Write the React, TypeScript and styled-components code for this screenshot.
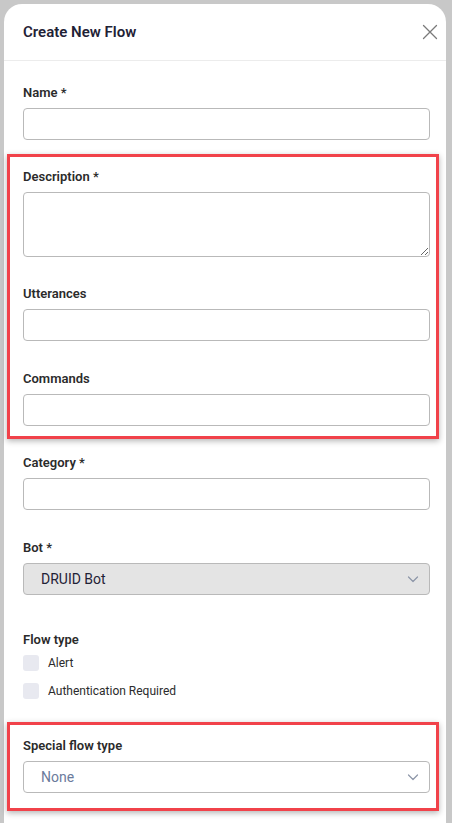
import * as React from 'react'
import styled, { createGlobalStyle } from 'styled-components'

const GlobalStyle = createGlobalStyle`
    html, body {
        margin: 0;
        padding: 0;
        background-color: #c8c8c8;
        font-family: Roboto, "Noto Sans", "Liberation Sans", sans-serif;
    }
`

const Page = styled.div`
    display: flex;
    height: 823px;
    padding: 4px 6px 0 4px;
    box-sizing: border-box;
    overflow: hidden;
`

const Modal = styled.div`
    flex: 1;
    display: flex;
    flex-direction: column;
    background-color: #ffffff;
    border-radius: 18px 18px 0 0;
`

const Header = styled.div`
    display: flex;
    align-items: center;
    justify-content: space-between;
    height: 56px;
    padding: 0 4px 0 19px;
    border-bottom: 1px solid #ececec;
`

const Title = styled.h2`
    margin: 0;
    font-size: 15px;
    font-weight: 600;
    color: #1f2236;
`

const CloseButton = styled.button`
    display: flex;
    width: 24px;
    height: 24px;
    padding: 0;
    border: none;
    background: none;
    align-items: center;
    justify-content: center;
    cursor: pointer;
`

const Body = styled.div`
    display: flex;
    flex-direction: column;
    padding: 24px 16px 0 19px;
`

const Field = styled.div<{ $gap?: number, $top?: number }>`
    display: flex;
    flex-direction: column;
    margin-top: ${props => props.$top ?? 0}px;
    margin-bottom: ${props => props.$gap ?? 29}px;
`

const Label = styled.label`
    font-size: 13px;
    line-height: 16px;
    font-weight: 600;
    color: #2b2b2b;
    margin-bottom: 7px;
`

const Input = styled.input`
    height: 32px;
    box-sizing: border-box;
    border: 1px solid #b9b9b9;
    border-radius: 4px;
    padding: 0 10px;
    font-family: inherit;
    font-size: 14px;
    outline: none;
`

const TextArea = styled.textarea`
    height: 65px;
    box-sizing: border-box;
    border: 1px solid #b9b9b9;
    border-radius: 4px;
    padding: 6px 10px;
    font-family: inherit;
    font-size: 14px;
    resize: vertical;
    outline: none;
`

const Select = styled.div<{ $disabled?: boolean }>`
    display: flex;
    align-items: center;
    justify-content: space-between;
    height: 32px;
    box-sizing: border-box;
    padding: 0 9px 0 17px;
    border: 1px solid #b9b9b9;
    border-radius: 4px;
    background-color: ${props => props.$disabled ? '#e4e4e4' : '#ffffff'};
    font-size: 14px;
    color: ${props => props.$disabled ? '#1f2236' : '#6b7b9c'};
`

// red annotation frame around a group of fields
const Highlight = styled.div<{ $top: number, $bottom: number }>`
    display: flex;
    flex-direction: column;
    margin: 0 -9px 0 -16px;
    padding: ${props => props.$top}px 6px ${props => props.$bottom}px 13px;
    border: 3px solid #f1424a;
    box-shadow: 0 2px 6px rgba(0, 0, 0, 0.3);
`

const CheckRow = styled.label`
    display: flex;
    align-items: center;
    gap: 9px;
    height: 16px;
    margin-bottom: 12px;
    font-size: 12px;
    color: #2b2b2b;
`

const CheckBox = styled.span`
    width: 16px;
    height: 16px;
    border-radius: 3px;
    background-color: #e8e9f0;
`

const Chevron = () => (
    <svg width="14" height="14" viewBox="0 0 14 14" fill="none">
        <path d="M2.5 5l4.5 4.5 4.5-4.5" stroke="#8d96a8" strokeWidth="1.2" strokeLinecap="round" strokeLinejoin="round" />
    </svg>
)

const CloseIcon = () => (
    <svg width="16" height="16" viewBox="0 0 16 16" fill="none">
        <path d="M1.5 1.5l13 13M14.5 1.5l-13 13" stroke="#7a7a7a" strokeWidth="1.3" strokeLinecap="round" />
    </svg>
)

export default function App() {
    return (
        <>
            <GlobalStyle />
            <Page>
                <Modal>
                    <Header>
                        <Title>Create New Flow</Title>
                        <CloseButton aria-label="close"><CloseIcon /></CloseButton>
                    </Header>
                    <Body>
                        <Field $gap={14}>
                            <Label>Name *</Label>
                            <Input />
                        </Field>
                        <Highlight $top={12} $bottom={10}>
                            <Field>
                                <Label>Description *</Label>
                                <TextArea />
                            </Field>
                            <Field $gap={30}>
                                <Label>Utterances</Label>
                                <Input />
                            </Field>
                            <Field $gap={0}>
                                <Label>Commands</Label>
                                <Input />
                            </Field>
                        </Highlight>
                        <Field $top={16} $gap={30}>
                            <Label>Category *</Label>
                            <Input />
                        </Field>
                        <Field $gap={37}>
                            <Label>Bot *</Label>
                            <Select $disabled>DRUID Bot<Chevron /></Select>
                        </Field>
                        <Field $gap={11}>
                            <Label>Flow type</Label>
                            <CheckRow><CheckBox />Alert</CheckRow>
                            <CheckRow><CheckBox />Authentication Required</CheckRow>
                        </Field>
                        <Highlight $top={13} $bottom={15}>
                            <Field $gap={0}>
                                <Label>Special flow type</Label>
                                <Select>None<Chevron /></Select>
                            </Field>
                        </Highlight>
                    </Body>
                </Modal>
            </Page>
        </>
    )
}
